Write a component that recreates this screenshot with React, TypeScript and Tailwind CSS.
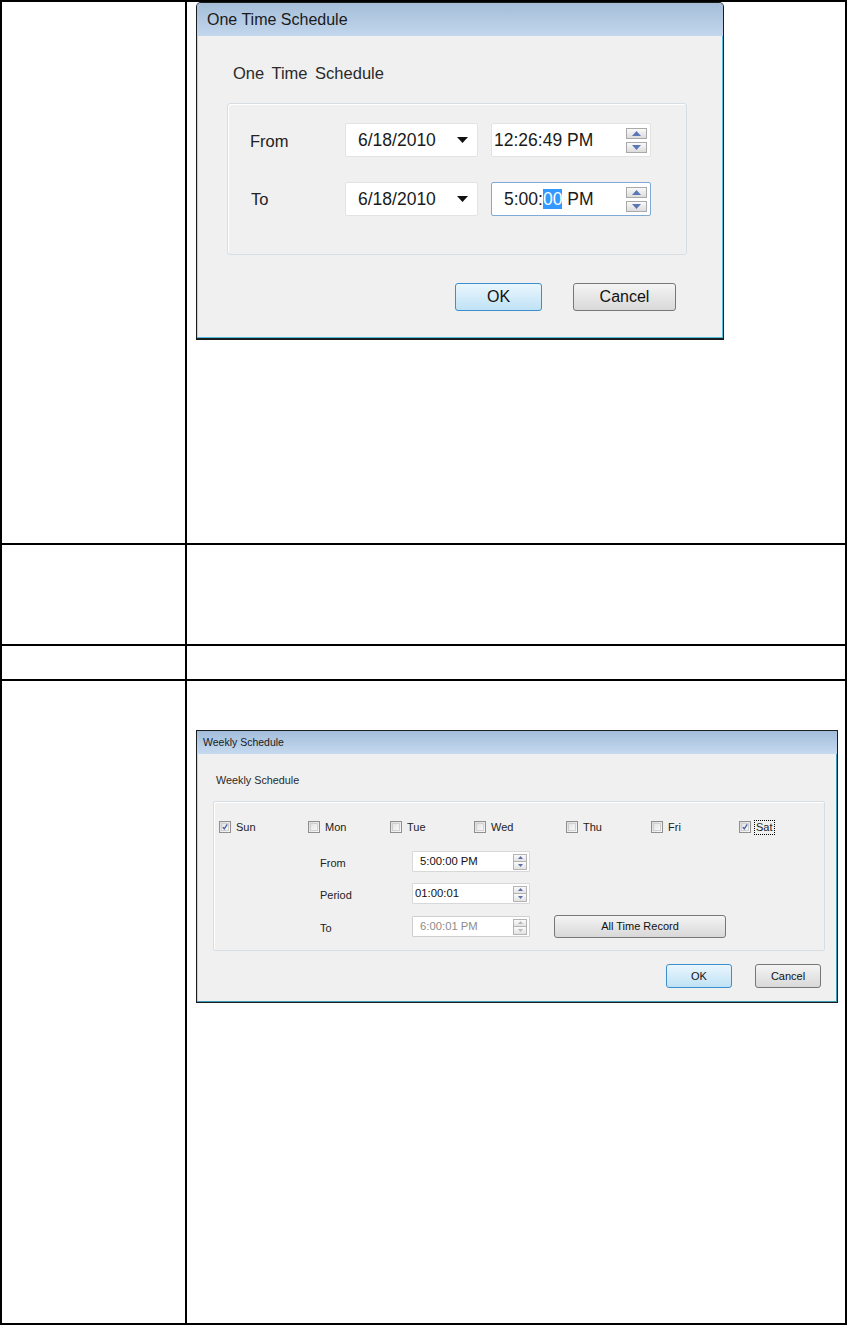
import React from 'react';

const font = { fontFamily: '"Liberation Sans", Arial, sans-serif' };

// small spin control used in the one time dialog
const BigSpin = ({ disabled }: { disabled?: boolean }) => (
  <div className="flex flex-col gap-[3px] mr-[3px]">
    <div className="w-[21px] h-[11px] border border-[#a9a9a9] bg-gradient-to-b from-[#fafafa] to-[#dcdcdc] flex items-center justify-center">
      <svg width="9" height="5" viewBox="0 0 9 5"><path d="M0 5 L4.5 0 L9 5 Z" fill={disabled ? '#b5b5b5' : '#5b78b4'} /></svg>
    </div>
    <div className="w-[21px] h-[11px] border border-[#a9a9a9] bg-gradient-to-b from-[#fafafa] to-[#dcdcdc] flex items-center justify-center">
      <svg width="9" height="5" viewBox="0 0 9 5"><path d="M0 0 L4.5 5 L9 0 Z" fill={disabled ? '#b5b5b5' : '#5b78b4'} /></svg>
    </div>
  </div>
);

const SmallSpin = ({ disabled }: { disabled?: boolean }) => (
  <div className="flex flex-col mr-[2px]">
    <div className="w-[14px] h-[8px] border border-[#b3b3b3] bg-gradient-to-b from-[#fbfbfb] to-[#e2e2e2] flex items-center justify-center">
      <svg width="5" height="3" viewBox="0 0 5 3"><path d="M0 3 L2.5 0 L5 3 Z" fill={disabled ? '#b8b8b8' : '#5b6fa8'} /></svg>
    </div>
    <div className="w-[14px] h-[8px] border border-t-0 border-[#b3b3b3] bg-gradient-to-b from-[#fbfbfb] to-[#e2e2e2] flex items-center justify-center">
      <svg width="5" height="3" viewBox="0 0 5 3"><path d="M0 0 L2.5 3 L5 0 Z" fill={disabled ? '#b8b8b8' : '#5b6fa8'} /></svg>
    </div>
  </div>
);

const DateBox = ({ value }: { value: string }) => (
  <div className="w-[133px] h-[34px] bg-white border border-[#e3e3e3] rounded-[2px] flex items-center pl-[12px] pr-[9px] text-[17.5px] text-[#1a1a1a]">
    <span className="flex-1">{value}</span>
    <svg width="11" height="6" viewBox="0 0 11 6"><path d="M0 0 L11 0 L5.5 6 Z" fill="#111" /></svg>
  </div>
);

const OneTimeDialog = () => (
  <div className="ml-[9px] w-[528px] h-[338px] border border-b-2 border-[#1c1c1c] rounded-t-[5px] bg-[#f0f0f0] flex flex-col shadow-[inset_-1px_-1px_0_#4fbde0,inset_1px_0_0_#b9d3ea]">
    <div className="h-[33px] rounded-t-[4px] flex items-center pl-[10px] bg-gradient-to-b from-[#a5bdd8] to-[#c2d7ed] text-[16px] text-[#1a1a1a]">
      One Time Schedule
    </div>
    <div className="mt-[27px] ml-[36px] h-[20px] leading-[20px] text-[16.5px] text-[#2a2a2a] [word-spacing:3px]">One Time Schedule</div>
    <div className="mt-[20px] ml-[30px] w-[460px] h-[152px] border border-[#d6dee4] rounded-[3px] shadow-[inset_1px_1px_0_#ffffff] pt-[19px] pl-[22px]">
      <div className="h-[34px] flex items-center">
        <span className="w-[95px] text-[16.5px] text-[#222] pt-[3px]">From</span>
        <DateBox value="6/18/2010" />
        <div className="ml-[13px] w-[160px] h-[34px] bg-white border border-[#e3e3e3] rounded-[2px] flex items-center pl-[2px] text-[17.5px] text-[#1a1a1a]">
          <span className="flex-1">12:26:49 PM</span>
          <BigSpin />
        </div>
      </div>
      <div className="mt-[25px] h-[34px] flex items-center">
        <span className="w-[95px] text-[16.5px] text-[#222] pl-[1px]">To</span>
        <DateBox value="6/18/2010" />
        <div className="ml-[13px] w-[160px] h-[34px] bg-white border border-[#7fa9d6] rounded-[2px] flex items-center pl-[12px] text-[17.5px] text-[#1a1a1a]">
          <span className="flex-1">5:00:<span className="bg-[#3399ff] text-white">00</span> PM</span>
          <BigSpin />
        </div>
      </div>
    </div>
    <div className="mt-[28px] flex justify-end gap-[31px] pr-[47px]">
      <div className="w-[87px] h-[28px] border border-[#3c8fcf] rounded-[3px] bg-gradient-to-b from-[#eaf6fd] to-[#bfe2f5] flex items-center justify-center text-[16px] text-[#111]">OK</div>
      <div className="w-[103px] h-[28px] border border-[#777] rounded-[3px] bg-gradient-to-b from-[#f4f4f4] to-[#d9d9d9] flex items-center justify-center text-[16px] text-[#111]">Cancel</div>
    </div>
  </div>
);

const CheckBox = ({ checked }: { checked?: boolean }) => (
  <div className="w-[12px] h-[12px] border border-[#8f8f8f] bg-gradient-to-br from-[#dcdcdc] to-[#fafafa] p-[1px]">
    <div className="w-full h-full border border-[#d0d0d0] bg-gradient-to-br from-[#e4e4e4] to-[#f8f8f8] flex items-center justify-center">
      {checked && (
        <svg width="8" height="8" viewBox="0 0 8 8"><path d="M1 4 L3 6.5 L7 0.5" stroke="#42589a" strokeWidth="1.6" fill="none" /></svg>
      )}
    </div>
  </div>
);

const days = [
  { label: 'Sun', checked: true, w: 'w-[89px]' },
  { label: 'Mon', checked: false, w: 'w-[82px]' },
  { label: 'Tue', checked: false, w: 'w-[84px]' },
  { label: 'Wed', checked: false, w: 'w-[92px]' },
  { label: 'Thu', checked: false, w: 'w-[85px]' },
  { label: 'Fri', checked: false, w: 'w-[88px]' },
  { label: 'Sat', checked: true, w: 'w-[60px]' },
];

const TimeRow = ({ label, value, indent, disabled }: { label: string; value: string; indent: string; disabled?: boolean }) => (
  <div className="flex items-center h-[21px]">
    <span className="w-[92px] text-[11px] text-[#222] pt-[3px]">{label}</span>
    <div className={`w-[118px] h-[21px] bg-white border rounded-[1px] flex items-center ${indent} text-[11.3px] ${disabled ? 'border-[#cfcfcf] text-[#8d8d8d]' : 'border-[#d8d8d8] text-[#111]'}`}>
      <span className="flex-1">{value}</span>
      <SmallSpin disabled={disabled} />
    </div>
  </div>
);

const WeeklyDialog = () => (
  <div className="mt-[49px] ml-[9px] w-[642px] h-[273px] border border-[#1c1c1c] bg-[#f0f0f0] flex flex-col shadow-[inset_-1px_-1px_0_#3a9cb8,inset_1px_0_0_#bcd4ea]">
    <div className="h-[23px] flex items-center pl-[6px] bg-gradient-to-b from-[#a2bddb] to-[#c6daef] text-[10.5px] text-[#1a1a1a]">
      Weekly Schedule
    </div>
    <div className="mt-[19px] ml-[19px] h-[14px] leading-[14px] text-[10.8px] text-[#2a2a2a]">Weekly Schedule</div>
    <div className="mt-[14px] ml-[16px] w-[612px] h-[150px] border border-[#d6dee4] rounded-[2px] shadow-[inset_1px_1px_0_#ffffff] pt-[18px] pl-[5px]">
      <div className="flex items-center h-[14px]">
        {days.map(d => (
          <div key={d.label} className={`${d.w} flex items-center gap-[3px]`}>
            <CheckBox checked={d.checked} />
            <span className={`text-[11px] text-[#222] leading-[13px] px-[1px] ${d.label === 'Sat' ? 'border border-dotted border-black' : 'border border-transparent'}`}>{d.label}</span>
          </div>
        ))}
      </div>
      <div className="mt-[17px] ml-[101px] flex flex-col gap-[11px]">
        <TimeRow label="From" value="5:00:00 PM" indent="pl-[7px]" />
        <TimeRow label="Period" value="01:00:01" indent="pl-[2px]" />
        <div className="flex items-center">
          <TimeRow label="To" value="6:00:01 PM" indent="pl-[7px]" disabled />
          <div className="ml-[24px] w-[172px] h-[23px] border border-[#777] rounded-[3px] bg-gradient-to-b from-[#f4f4f4] to-[#d8d8d8] flex items-center justify-center text-[11px] text-[#111]">All Time Record</div>
        </div>
      </div>
    </div>
    <div className="mt-[13px] flex justify-end gap-[23px] pr-[16px]">
      <div className="w-[66px] h-[24px] border border-[#3c8fcf] rounded-[3px] bg-gradient-to-b from-[#eaf6fd] to-[#bfe2f5] flex items-center justify-center text-[11px] text-[#111]">OK</div>
      <div className="w-[66px] h-[24px] border border-[#777] rounded-[3px] bg-gradient-to-b from-[#f4f4f4] to-[#d9d9d9] flex items-center justify-center text-[11px] text-[#111]">Cancel</div>
    </div>
  </div>
);

export default function App() {
  return (
    <div className="w-[847px] h-[1325px] bg-white" style={font}>
      <div className="w-full h-full border-2 border-black flex flex-col">
        {/* row 1 */}
        <div className="h-[543px] flex border-b-2 border-black">
          <div className="w-[185px] border-r-2 border-black" />
          <div className="flex-1">
            <OneTimeDialog />
          </div>
        </div>
        {/* row 2 */}
        <div className="h-[101px] flex border-b-2 border-black">
          <div className="w-[185px] border-r-2 border-black" />
          <div className="flex-1" />
        </div>
        {/* row 3 */}
        <div className="h-[35px] flex border-b-2 border-black">
          <div className="w-[185px] border-r-2 border-black" />
          <div className="flex-1" />
        </div>
        {/* row 4 */}
        <div className="flex-1 flex">
          <div className="w-[185px] border-r-2 border-black" />
          <div className="flex-1">
            <WeeklyDialog />
          </div>
        </div>
      </div>
    </div>
  );
}
